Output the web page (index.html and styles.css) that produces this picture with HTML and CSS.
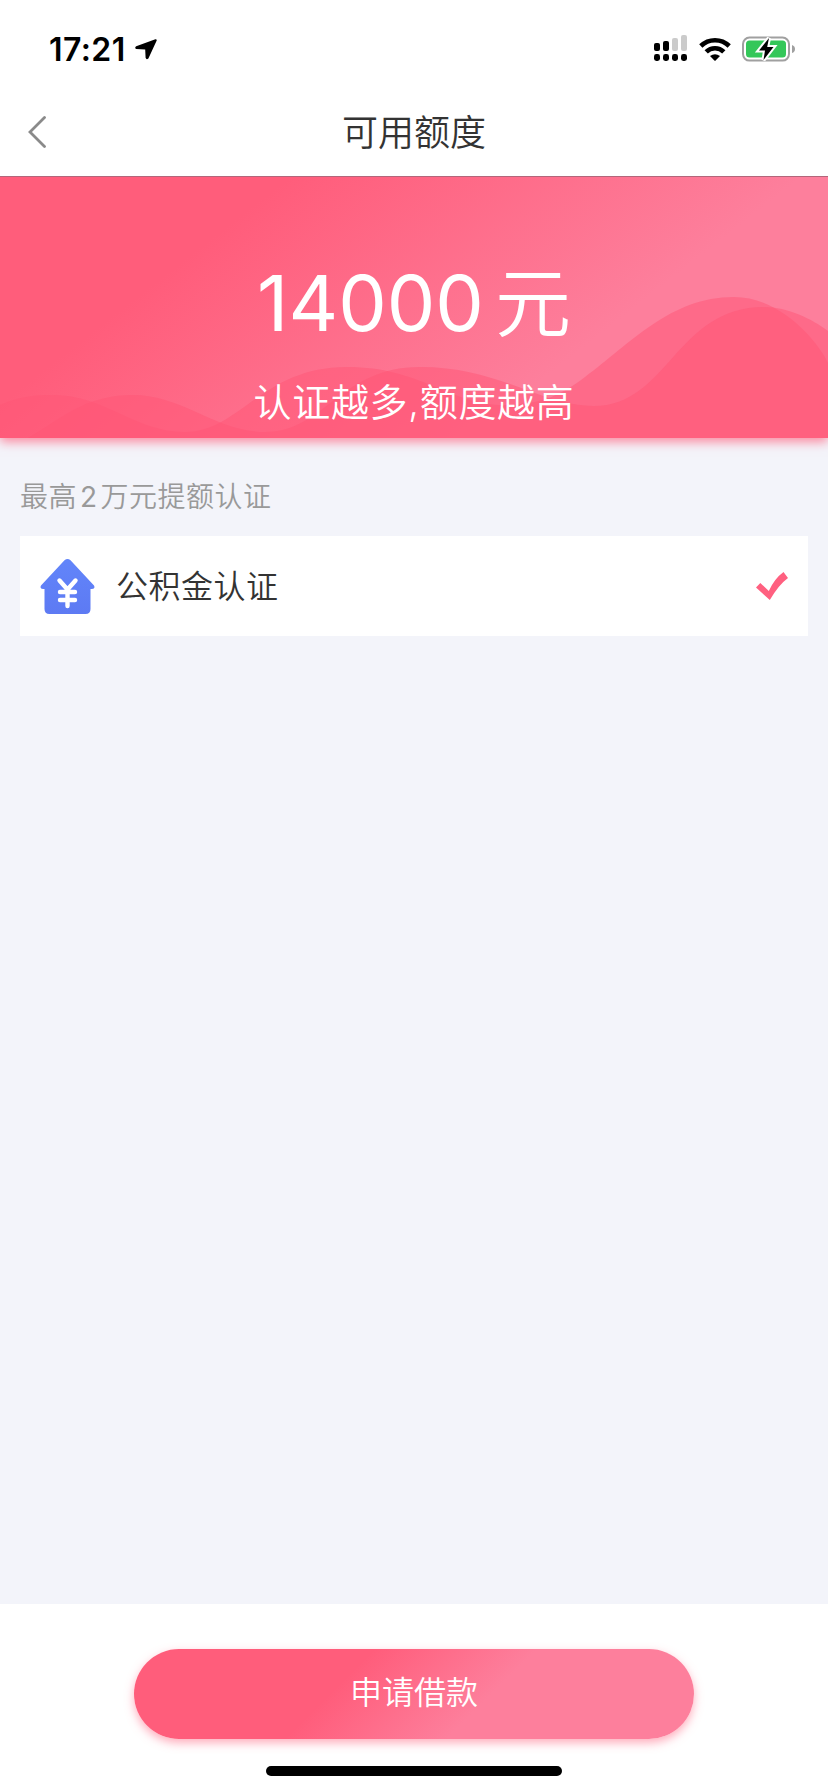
FILE: index.html
```html
<!DOCTYPE html>
<html lang="zh-CN">
<head>
    <meta charset="UTF-8">
    <meta name="viewport" content="width=device-width, initial-scale=1.0">
    <title>可用额度</title>
    <link rel="stylesheet" href="styles.css">
</head>
<body>
    <div class="status-bar">
        <div class="status-left">
            <span class="time">17:21</span>
            <svg class="location" width="22" height="21" viewBox="0 0 22 21">
                <path d="M20.4 0.2 L1.2 7.2 Q-0.8 9 1.2 10.1 L10.2 10.6 L10.6 18.8 Q11.4 21.2 13.4 19.4 L21.7 1.6 Q22 0 20.4 0.2 Z"/>
            </svg>
        </div>
        <div class="status-right">
            <svg width="34" height="26" viewBox="0 0 34 26">
                <g fill="#000">
                    <rect x="0" y="8" width="6" height="8" rx="2"/>
                    <rect x="9" y="6" width="6" height="10" rx="2"/>
                    <rect x="0" y="19" width="6" height="7" rx="2.4"/>
                    <rect x="9" y="19" width="6" height="7" rx="2.4"/>
                    <rect x="18" y="19" width="6" height="7" rx="2.4"/>
                    <rect x="27" y="19" width="6" height="7" rx="2.4"/>
                </g>
                <g fill="#cbcbcb">
                    <rect x="18" y="3" width="6" height="13" rx="2"/>
                    <rect x="27" y="0" width="6" height="16" rx="2"/>
                </g>
            </svg>
            <svg class="wifi" width="32" height="24" viewBox="0 0 32 24">
                <g fill="none" stroke="#000" stroke-width="4.6">
                    <path d="M1.8 9 A20.3 20.3 0 0 1 30.2 9"/>
                    <path d="M7.2 14.9 A12.4 12.4 0 0 1 24.8 14.9"/>
                </g>
                <path d="M11 19 Q16 15.4 21 19 L16.6 23.5 Q16 24 15.4 23.5 Z"/>
            </svg>
            <svg class="battery" width="54" height="26" viewBox="0 0 54 26">
                <rect x="1" y="1.6" width="46" height="23" rx="6.5" fill="#fff" stroke="#a0a0a0" stroke-width="2"/>
                <rect x="4" y="4.6" width="40" height="17" rx="3.5" fill="#34c759"/>
                <path d="M50 9 Q53 10 53 13 T50 17 Z" fill="#a0a0a0"/>
                <path d="M27 2 L17 14.6 H23 L21.5 24 L31.5 11 H25.2 Z" fill="#000" stroke="#fff" stroke-width="4" paint-order="stroke"/>
            </svg>
        </div>
    </div>

    <div class="nav-bar">
        <svg class="back" width="18" height="32" viewBox="0 0 18 32">
            <path d="M16.5 1.5 L2 16 L16.5 30.5" fill="none" stroke="#8a8a8a" stroke-width="2.8" stroke-linecap="round"/>
        </svg>
        <h1>可用额度</h1>
    </div>

    <div class="banner">
        <svg class="waves" width="828" height="261" viewBox="0 0 828 261">
            <path d="M0 228 C20 219 36 218 53 218 C105 218 135 255 185 255 C240 255 262 190 347 190 C420 190 448 226 500 228 C540 228 560 219 585 200 C630 167 670 120 734 120 C780 120 818 164 828 186 V261 H0 Z"/>
            <path d="M28 261 C60 243 84 218 133 218 C183 218 216 255 265 255 C325 255 340 190 420 190 C500 190 540 229 594 229 C668 229 676 130 764 130 C788 130 812 142 828 154 V261 Z"/>
        </svg>
        <div class="amount"><span class="value">14000</span><span class="unit">元</span></div>
        <div class="slogan">认证越多,额度越高</div>
    </div>

    <div class="content">
        <div class="section-title">最高<span class="num">2</span>万元提额认证</div>
        <div class="item">
            <svg width="55" height="55" viewBox="0 0 55 55">
                <defs>
                    <linearGradient id="house" x1="0" y1="0" x2="0" y2="1">
                        <stop offset="0" stop-color="#6285fa"/>
                        <stop offset="1" stop-color="#5d7af3"/>
                    </linearGradient>
                </defs>
                <path d="M24.5 1.2 Q27.5 -1.2 30.5 1.2 L54 26.6 Q55.6 30 52 30 H50.5 V50 Q50.5 55 45.5 55 H9.5 Q4.5 55 4.5 50 V30 H3 Q-0.6 30 1 26.6 Z" fill="url(#house)"/>
                <path d="M19.5 21.5 L27.5 30.5 L35.5 21.5 M27.5 31 V47 M20 33 H35 M20 41 H35" fill="none" stroke="#fff" stroke-width="4.4" stroke-linecap="round" stroke-linejoin="round"/>
            </svg>
            <span class="item-name">公积金认证</span>
            <svg class="check" width="32" height="28" viewBox="0 0 32 28">
                <path d="M0 15.5 L4.3 11 L12.8 19 Q18.5 6.5 27.5 0 L32 6 Q23 12.5 13.8 28 Z" fill="#ff6080"/>
            </svg>
        </div>
    </div>

    <div class="footer">
        <button type="button">申请借款</button>
        <div class="home-indicator"></div>
    </div>
</body>
</html>
```

FILE: styles.css
```css
* {
    box-sizing: border-box;
}
body {
    margin: 0;
    height: 1792px;
    display: flex;
    flex-direction: column;
    font-family: Inter, "Noto Sans CJK SC", sans-serif;
    font-weight: 350;
    background-color: #f3f4fa;
    color: #333;
    overflow: hidden;
}
svg {
    display: block;
    flex: none;
}
.status-bar {
    height: 88px;
    padding: 10px 32px 0 49px;
    display: flex;
    justify-content: space-between;
    align-items: center;
    background: #fff;
}
.status-left,
.status-right {
    display: flex;
    align-items: center;
}
.time {
    width: 86px;
    font-size: 32px;
    font-weight: 600;
    letter-spacing: 0.4px;
    color: #000;
}
.status-right {
    padding-bottom: 3px;
}
.wifi,
.battery {
    margin: 2px 0 0 11px;
}
.nav-bar {
    position: relative;
    z-index: 1;
    height: 88px;
    padding: 0 28px;
    display: grid;
    grid-template-columns: 60px 1fr 60px;
    align-items: center;
    background: #fff;
}
h1 {
    margin: 0;
    padding: 0 0 4px;
    font-size: 36px;
    font-weight: 350;
    text-align: center;
}
.banner {
    position: relative;
    height: 262px;
    padding-top: 70px;
    border-top: 1px solid #b2667a;
    background: linear-gradient(142deg, #ff5d7b 25%, #fd7f9c 69%);
    box-shadow: 0 4px 10px rgba(255, 93, 123, 0.7);
    color: #fff;
    text-align: center;
}
/* Waves lie behind the banner text */
.waves {
    position: absolute;
    left: 0;
    bottom: 0;
    fill: #ff5676;
    fill-opacity: 0.5;
}
.amount,
.slogan {
    position: relative;
}
.amount {
    height: 112px;
    display: flex;
    justify-content: center;
    align-items: center;
    font-size: 77px;
    line-height: 112px;
}
.value,
.num {
    font-weight: 400;
}
.unit {
    margin-left: 11px;
    font-size: 76px;
}
.slogan {
    font-size: 38px;
    line-height: 56px;
    letter-spacing: 0.7px;
    margin-top: 15px;
}
.content {
    flex: 1;
    padding: 39px 20px 0;
}
.section-title {
    height: 59px;
    font-size: 28px;
    line-height: 40px;
    letter-spacing: 0.5px;
    color: #999;
}
.num {
    margin: 0 3px;
}
.item {
    height: 100px;
    padding: 0 20px;
    display: flex;
    align-items: center;
    background: #fff;
}
.item-name {
    flex: 1;
    margin-left: 21px;
    padding-bottom: 4px;
    font-size: 32px;
    letter-spacing: 0.5px;
}
.footer {
    height: 188px;
    padding-top: 45px;
    display: flex;
    flex-direction: column;
    align-items: center;
    background: #fff;
}
button {
    width: 560px;
    height: 90px;
    padding: 0 0 8px;
    border: none;
    border-radius: 45px;
    background: linear-gradient(135deg, #ff5d7b 37%, #fd7f9c 62%);
    box-shadow: 0 4px 10px rgba(255, 93, 123, 0.5);
    color: #fff;
    font-family: inherit;
    font-size: 32px;
    font-weight: 350;
}
.home-indicator {
    width: 296px;
    height: 10px;
    margin-top: 27px;
    border-radius: 5px;
    background: #000;
}
```
